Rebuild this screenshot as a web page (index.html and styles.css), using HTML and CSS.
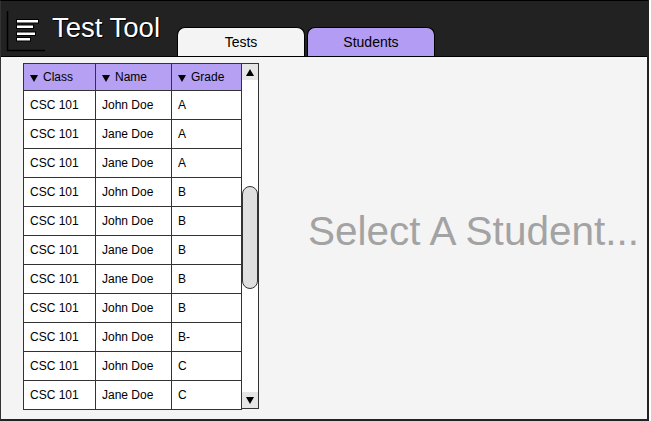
FILE: index.html
```html
<!DOCTYPE html>
<html>
<head>
<meta charset="utf-8">
<link rel="stylesheet" href="styles.css">
</head>
<body>
<div class="frame">
  <header class="header">
    <div class="logo">
      <svg width="40" height="42" viewBox="0 0 40 42">
        <path d="M1.5 1 V40.5 H39" fill="none" stroke="#000" stroke-width="1.5"/>
        <rect x="10.5" y="9.5" width="22" height="3.5" fill="#fff" stroke="#000" stroke-width="1"/>
        <rect x="10.5" y="15" width="17" height="3.5" fill="#fff" stroke="#000" stroke-width="1"/>
        <rect x="10.5" y="22" width="19" height="3.5" fill="#fff" stroke="#000" stroke-width="1"/>
        <rect x="10.5" y="27.5" width="14" height="3.5" fill="#fff" stroke="#000" stroke-width="1"/>
      </svg>
    </div>
    <h1 class="title">Test Tool</h1>
    <div class="tabs">
      <div class="tab">Tests</div>
      <div class="tab active">Students</div>
    </div>
  </header>
  <main class="content">
    <div class="grid-wrap">
      <table class="grid">
        <thead>
          <tr><th class="c1"><span class="arr"></span>Class</th><th class="c2"><span class="arr"></span>Name</th><th class="c3"><span class="arr"></span>Grade</th></tr>
        </thead>
        <tbody>
          <tr><td>CSC 101</td><td>John Doe</td><td>A</td></tr>
          <tr><td>CSC 101</td><td>Jane Doe</td><td>A</td></tr>
          <tr><td>CSC 101</td><td>Jane Doe</td><td>A</td></tr>
          <tr><td>CSC 101</td><td>John Doe</td><td>B</td></tr>
          <tr><td>CSC 101</td><td>John Doe</td><td>B</td></tr>
          <tr><td>CSC 101</td><td>Jane Doe</td><td>B</td></tr>
          <tr><td>CSC 101</td><td>Jane Doe</td><td>B</td></tr>
          <tr><td>CSC 101</td><td>John Doe</td><td>B</td></tr>
          <tr><td>CSC 101</td><td>John Doe</td><td>B-</td></tr>
          <tr><td>CSC 101</td><td>John Doe</td><td>C</td></tr>
          <tr><td>CSC 101</td><td>Jane Doe</td><td>C</td></tr>
        </tbody>
      </table>
      <div class="scrollbar">
        <div class="sb-btn"><span class="tri up"></span></div>
        <div class="sb-track"><div class="sb-thumb"></div></div>
        <div class="sb-btn"><span class="tri down"></span></div>
      </div>
    </div>
    <div class="placeholder">Select A Student...</div>
  </main>
</div>
</body>
</html>
```
FILE: styles.css
```css
html, body {
  margin: 0;
  padding: 0;
  background: #fff;
  font-family: "Liberation Sans", Arial, sans-serif;
}
.frame {
  width: 649px;
  height: 421px;
  box-sizing: border-box;
  border-top: 1px solid #000;
  border-left: 1px solid #333;
  border-right: 2px solid #222;
  border-bottom: 2px solid #222;
  background: #f4f4f4;
  display: flex;
  flex-direction: column;
}
.header {
  height: 56px;
  box-sizing: border-box;
  background: #222222;
  border-bottom: 1px solid #000;
  display: flex;
  align-items: flex-start;
}
.logo {
  margin: 9px 0 0 5px;
  width: 40px;
  height: 42px;
}
.logo svg { display: block; }
.title {
  width: 125px;
  margin: 12px 0 0 6px;
  font-size: 27.5px;
  font-weight: normal;
  line-height: 30px;
  color: #fff;
  text-shadow: 0 0 1px #000, 1px 1px 0 #000;
  white-space: nowrap;
}
.tabs {
  display: flex;
  gap: 2px;
  align-self: flex-end;
}
.tab {
  width: 126px;
  height: 28px;
  border: 1px solid #000;
  border-bottom: none;
  border-radius: 8px 8px 0 0;
  background: #f4f4f4;
  color: #000;
  font-size: 14px;
  line-height: 28px;
  text-align: center;
}
.tab.active {
  background: #b39cf3;
}
.content {
  flex: 1;
  display: flex;
  align-items: flex-start;
}
.grid-wrap {
  display: flex;
  margin: 6px 0 0 22px;
}
.grid {
  border-collapse: collapse;
  font-size: 12px;
  color: #000;
  background: #fff;
}
.grid th, .grid td {
  border: 1px solid #333;
  padding: 0 0 0 6px;
  text-align: left;
  font-weight: normal;
  box-sizing: border-box;
}
.grid th {
  background: #b5a0f3;
  height: 27px;
}
.grid td {
  height: 29px;
}
.c1 { width: 72px; }
.c2 { width: 76px; }
.c3 { width: 70px; }
.arr {
  display: inline-block;
  width: 0;
  height: 0;
  border-left: 4px solid transparent;
  border-right: 4px solid transparent;
  border-top: 7px solid #000;
  margin-right: 5px;
  vertical-align: -1px;
}
.scrollbar {
  width: 17px;
  height: 346px;
  box-sizing: border-box;
  border: 1px solid #333;
  border-left: none;
  background: #fff;
  display: flex;
  flex-direction: column;
}
.sb-btn {
  height: 16px;
  background: #e6e6e6;
  display: flex;
  align-items: center;
  justify-content: center;
}
.tri {
  width: 0;
  height: 0;
  border-left: 4px solid transparent;
  border-right: 4px solid transparent;
}
.tri.up { border-bottom: 7px solid #000; }
.tri.down { border-top: 7px solid #000; }
.sb-track {
  flex: 1;
  position: relative;
}
.sb-thumb {
  position: absolute;
  left: 0;
  top: 106px;
  width: 16px;
  height: 103px;
  box-sizing: border-box;
  background: #e0e0e0;
  border: 1px solid #333;
  border-radius: 8px;
}
.placeholder {
  margin: 151px 0 0 49px;
  font-size: 40.5px;
  line-height: 46px;
  color: #a3a3a3;
  white-space: nowrap;
}
```
